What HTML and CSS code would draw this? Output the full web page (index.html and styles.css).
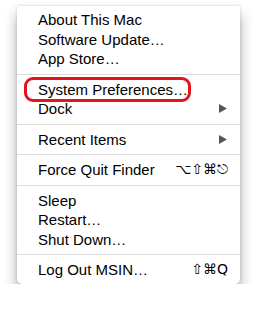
FILE: index.html
```html
<!DOCTYPE html>
<html lang="en">
<head>
    <meta charset="UTF-8">
    <meta name="viewport" content="width=device-width, initial-scale=1.0">
    <title>Apple Menu</title>
    <link rel="stylesheet" href="styles.css">
</head>
<body>

    <div class="menu">
        <ul class="menu-list">
            <li class="item">About This Mac</li>
            <li class="item">Software Update…</li>
            <li class="item">App Store…</li>
            <li class="sep"></li>
            <li class="item marked">System Preferences…<span class="ring"></span></li>
            <li class="item">Dock
                <svg class="arrow" width="8" height="9" viewBox="0 0 8 9"><polygon points="0,0 8,4.5 0,9" fill="#555"/></svg>
            </li>
            <li class="sep"></li>
            <li class="item">Recent Items
                <svg class="arrow" width="8" height="9" viewBox="0 0 8 9"><polygon points="0,0 8,4.5 0,9" fill="#555"/></svg>
            </li>
            <li class="sep"></li>
            <li class="item">Force Quit Finder <span class="keys">⌥⇧⌘⎋</span></li>
            <li class="sep"></li>
            <li class="item">Sleep</li>
            <li class="item">Restart…</li>
            <li class="item">Shut Down…</li>
            <li class="sep"></li>
            <li class="item">Log Out MSIN… <span class="keys">⇧⌘Q</span></li>
        </ul>
    </div>

</body>
</html>
```

FILE: styles.css
```css
body {
    margin: 0;
    padding: 6px 17px 0 17px;
    background-color: white;
    font-family: "Liberation Sans", Arial, sans-serif;
}
.menu {
    width: 223px;
    background-color: white;
    border-radius: 0 0 5px 5px;
    box-shadow: 0 9px 14px rgba(0, 0, 0, 0.32), 0 0 3px rgba(0, 0, 0, 0.18);
    padding: 4px 0 4px 0;
}
.menu-list {
    list-style: none;
    margin: 0;
    padding: 0;
}
.item {
    position: relative;
    display: flex;
    justify-content: space-between;
    align-items: center;
    height: 19.5px;
    line-height: 19.5px;
    padding: 0 13px 0 21px;
    font-size: 15px;
    color: #000;
    white-space: nowrap;
}
.sep {
    height: 1px;
    margin: 5px 0;
    background-color: #dedede;
}
.arrow {
    display: block;
}
.keys {
    font-family: "DejaVu Sans", sans-serif;
    font-size: 14px;
    margin-right: -1px;
}
.ring {
    position: absolute;
    left: 7px;
    top: -3px;
    width: 161px;
    height: 19px;
    border: 3px solid #e5141c;
    border-radius: 9px;
}
```
